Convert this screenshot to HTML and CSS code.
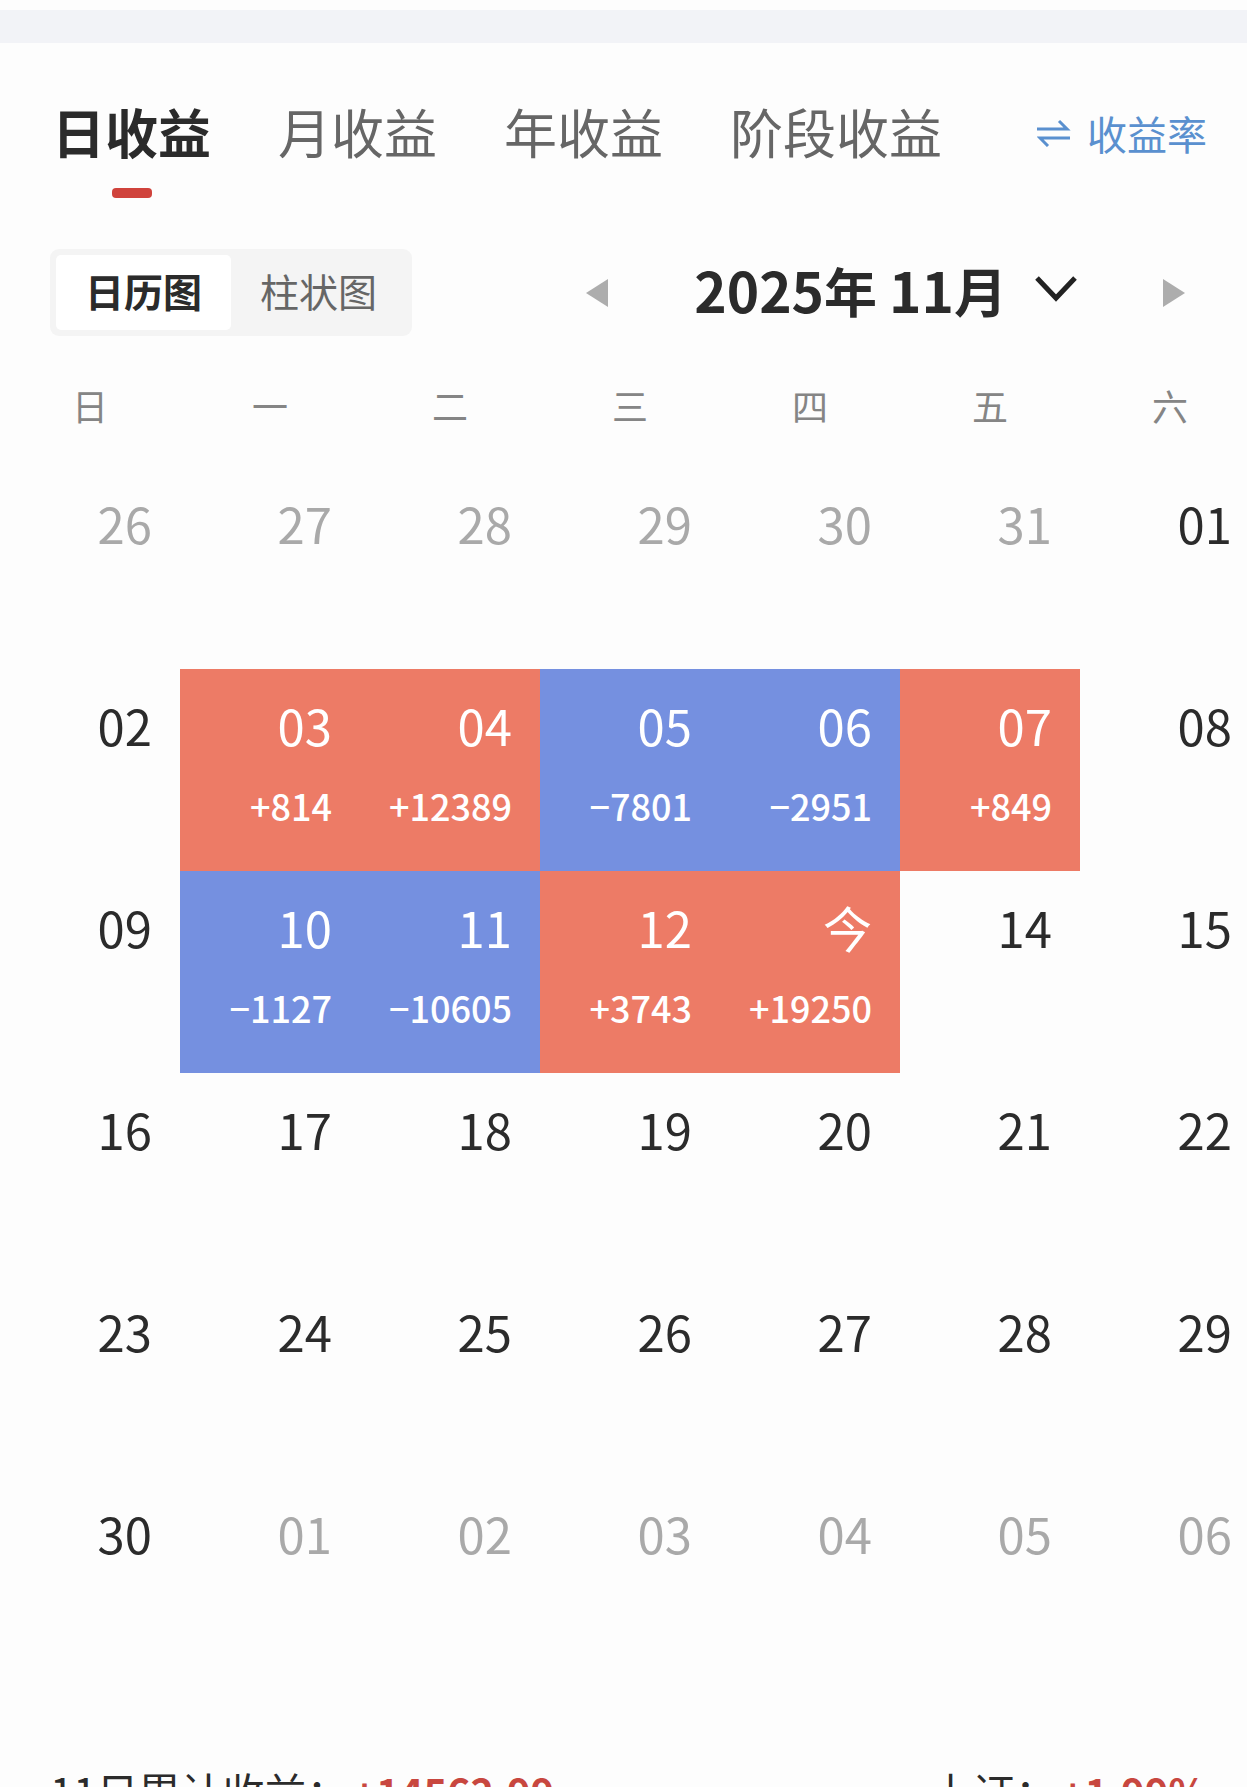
FILE: index.html
```
<!DOCTYPE html>
<html lang="zh-CN">

<head>
    <meta charset="UTF-8">
    <meta name="viewport" content="width=device-width, initial-scale=1.0">
    <title>日收益</title>
    <link rel="stylesheet" href="styles.css">
</head>

<body>
    <div class="band"></div>

    <header class="top">
        <nav class="tabs">
            <button type="button" class="tab active">日收益</button>
            <button type="button" class="tab">月收益</button>
            <button type="button" class="tab">年收益</button>
            <button type="button" class="tab">阶段收益</button>
        </nav>
        <a href="#" class="rate">
            <svg width="34" height="28" viewBox="0 0 34 28" fill="none" stroke="currentColor" stroke-width="3">
                <path d="M0 10H30L22 2M33 19H3L11 27" />
            </svg>
            收益率
        </a>
    </header>

    <div class="toolbar">
        <div class="switch">
            <button type="button" class="mode active">日历图</button>
            <button type="button" class="mode">柱状图</button>
        </div>
        <div class="month">
            <button type="button" class="arrow" aria-label="上个月">
                <svg width="22" height="28" viewBox="0 0 22 28"><path d="M22 0V28L0 14Z" fill="#adadad" /></svg>
            </button>
            <button type="button" class="picker">
                <span><span class="num">2025</span>年 <span class="num">11</span>月</span>
                <svg width="42" height="27" viewBox="0 0 42 27" fill="none" stroke="#222" stroke-width="5">
                    <path d="M2 2L21 22L40 2" />
                </svg>
            </button>
            <button type="button" class="arrow" aria-label="下个月">
                <svg width="22" height="28" viewBox="0 0 22 28"><path d="M0 0V28L22 14Z" fill="#adadad" /></svg>
            </button>
        </div>
    </div>

    <main class="calendar">
        <table class="days">
            <thead>
                <tr><th>日</th><th>一</th><th>二</th><th>三</th><th>四</th><th>五</th><th>六</th></tr>
            </thead>
            <tbody>
                <tr>
                    <td class="other">26</td>
                    <td class="other">27</td>
                    <td class="other">28</td>
                    <td class="other">29</td>
                    <td class="other">30</td>
                    <td class="other">31</td>
                    <td>01</td>
                </tr>
                <tr>
                    <td>02</td>
                    <td class="up">03<span class="amount">+814</span></td>
                    <td class="up">04<span class="amount">+12389</span></td>
                    <td class="down">05<span class="amount">−7801</span></td>
                    <td class="down">06<span class="amount">−2951</span></td>
                    <td class="up">07<span class="amount">+849</span></td>
                    <td>08</td>
                </tr>
                <tr>
                    <td>09</td>
                    <td class="down">10<span class="amount">−1127</span></td>
                    <td class="down">11<span class="amount">−10605</span></td>
                    <td class="up">12<span class="amount">+3743</span></td>
                    <td class="up">今<span class="amount">+19250</span></td>
                    <td>14</td>
                    <td>15</td>
                </tr>
                <tr><td>16</td><td>17</td><td>18</td><td>19</td><td>20</td><td>21</td><td>22</td></tr>
                <tr><td>23</td><td>24</td><td>25</td><td>26</td><td>27</td><td>28</td><td>29</td></tr>
                <tr>
                    <td>30</td>
                    <td class="other">01</td>
                    <td class="other">02</td>
                    <td class="other">03</td>
                    <td class="other">04</td>
                    <td class="other">05</td>
                    <td class="other">06</td>
                </tr>
            </tbody>
        </table>
    </main>

    <footer class="summary">
        <p>11日累计收益：<span class="gain">+14562.99</span></p>
        <p>上证：<span class="gain">+1.99%</span></p>
    </footer>
</body>

</html>
```
FILE: styles.css
```
* {
    box-sizing: border-box;
}

body {
    margin: 0;
    padding-top: 10px;
    background-color: #fdfdfd;
    color: #2b2b2b;
    font-family: "Noto Sans CJK SC", sans-serif;
    overflow: hidden;
    height: 100vh;
}

button {
    border: 0;
    padding: 0;
    background: none;
    color: inherit;
    font: inherit;
    cursor: pointer;
}

svg {
    display: block;
    flex: none;
}

.band {
    height: 33px;
    background-color: #f2f3f7;
}

.top,
.toolbar,
.summary {
    display: flex;
    justify-content: space-between;
    padding: 0 40px 0 50px;
    white-space: nowrap;
}

.top {
    align-items: flex-start;
    padding-top: 53px;
}

.tabs {
    display: flex;
    gap: 67px;
    padding-left: 2px;
}

.tab {
    display: flex;
    flex-direction: column;
    align-items: center;
    height: 102px;
    color: #666;
    font-size: 53px;
    line-height: 70px;
}

.tab.active {
    color: #2b2b2b;
    font-weight: bold;
}

.tab.active::after {
    content: "";
    width: 40px;
    height: 10px;
    margin-top: 22px;
    border-radius: 4px;
    background-color: #d0433c;
}

.rate {
    display: flex;
    align-items: center;
    gap: 16px;
    color: #5a90cf;
    font-size: 40px;
    line-height: 74px;
    text-decoration: none;
}

.toolbar {
    align-items: center;
    padding-right: 62px;
    margin-top: 51px;
}

.switch {
    display: flex;
    padding: 6px;
    border-radius: 9px;
    background-color: #f4f4f4;
}

.mode {
    width: 175px;
    height: 75px;
    padding-bottom: 6px;
    border-radius: 5px;
    color: #666;
    font-size: 39px;
}

.mode.active {
    background-color: #fff;
    color: #2b2b2b;
    font-weight: bold;
}

.month {
    display: flex;
    align-items: center;
}

.picker {
    display: flex;
    align-items: center;
    gap: 28px;
    margin: 0 86px;
    padding-bottom: 6px;
    font-size: 53px;
    font-weight: bold;
    line-height: 74px;
}

.num {
    font-size: 55px;
}

/* the last column runs slightly past the right edge */
.calendar {
    margin-right: -13px;
}

.days {
    width: 100%;
    table-layout: fixed;
    border-collapse: collapse;
}

.days th {
    height: 131px;
    padding: 6px 0 0;
    color: #858585;
    font-size: 36px;
    font-weight: normal;
}

.days td {
    height: 202px;
    padding: 26px 28px 0 0;
    font-size: 49px;
    line-height: 60px;
    text-align: right;
    vertical-align: top;
}

.days .other {
    color: #a9a9a9;
}

.days .up {
    background-color: #ed7b66;
    color: #fff;
}

.days .down {
    background-color: #7590e0;
    color: #fff;
}

.amount {
    display: block;
    margin-top: 20px;
    font-size: 36px;
    font-weight: 500;
}

.summary {
    padding-top: 82px;
    font-size: 42px;
    line-height: 60px;
}

.summary p {
    margin: 0;
}

.gain {
    margin-left: 4px;
    color: #c8473f;
    font-size: 40px;
    font-weight: bold;
}
```
